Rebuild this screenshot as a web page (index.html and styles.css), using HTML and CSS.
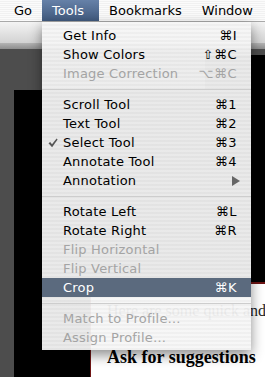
FILE: index.html
```html
<!DOCTYPE html>
<html lang="en">
<head>
    <meta charset="UTF-8">
    <meta name="viewport" content="width=device-width, initial-scale=1.0">
    <title>Tools menu</title>
    <link rel="stylesheet" href="styles.css">
</head>
<body>
    <!-- Строка меню -->
    <div class="menubar">
        <span class="menubar-item">Go</span>
        <span class="menubar-item active">Tools</span>
        <span class="menubar-item">Bookmarks</span>
        <span class="menubar-item">Window</span>
    </div>

    <!-- Окно под меню -->
    <div class="desk">
        <div class="toolbar"></div>
        <div class="toolbar-edge"></div>
        <div class="workspace">
            <div class="canvas">
                <div class="page">
                    <p class="page-text">Here are some quick and</p>
                    <h2 class="page-title">Ask for suggestions</h2>
                </div>
            </div>
        </div>
    </div>

    <!-- Выпадающее меню Tools -->
    <div class="menu">
        <div class="menu-item"><span>Get Info</span><span class="key">⌘I</span></div>
        <div class="menu-item"><span>Show Colors</span><span class="key">⇧⌘C</span></div>
        <div class="menu-item disabled"><span>Image Correction</span><span class="key">⌥⌘C</span></div>
        <div class="menu-sep"></div>
        <div class="menu-item"><span>Scroll Tool</span><span class="key">⌘1</span></div>
        <div class="menu-item"><span>Text Tool</span><span class="key">⌘2</span></div>
        <div class="menu-item checked">
            <svg class="check" width="10" height="10" viewBox="0 0 10 10">
                <path d="M0.5 5.2 L2.2 4 L4 6.3 L8.6 0.6 L9.6 1.5 L4.1 9.2 Z" fill="#555"/>
            </svg>
            <span>Select Tool</span><span class="key">⌘3</span>
        </div>
        <div class="menu-item"><span>Annotate Tool</span><span class="key">⌘4</span></div>
        <div class="menu-item">
            <span>Annotation</span>
            <svg class="arrow" width="8" height="10" viewBox="0 0 8 10">
                <path d="M0 0 L8 5 L0 10 Z" fill="#666"/>
            </svg>
        </div>
        <div class="menu-sep"></div>
        <div class="menu-item"><span>Rotate Left</span><span class="key">⌘L</span></div>
        <div class="menu-item"><span>Rotate Right</span><span class="key">⌘R</span></div>
        <div class="menu-item disabled"><span>Flip Horizontal</span></div>
        <div class="menu-item disabled"><span>Flip Vertical</span></div>
        <div class="menu-item selected"><span>Crop</span><span class="key">⌘K</span></div>
        <div class="menu-sep"></div>
        <div class="menu-item disabled"><span>Match to Profile…</span></div>
        <div class="menu-item disabled"><span>Assign Profile…</span></div>
    </div>
</body>
</html>
```

FILE: styles.css
```css
body {
    font-family: 'DejaVu Sans', sans-serif;
    font-size: 13px;
    margin: 0;
    width: 265px;
    height: 377px;
    overflow: hidden;
    position: relative;
    background-color: #4d4d4d;
}
.menubar {
    display: flex;
    height: 22px;
    padding-left: 4px;
    background: repeating-linear-gradient(#fbfbfb 0, #fbfbfb 1px, #f1f1f1 1px, #f1f1f1 2px);
    border-bottom: 1px solid #a9a9a9;
    box-sizing: border-box;
}
.menubar-item {
    padding: 0 10px;
    line-height: 22px;
    color: #000;
}
.menubar-item.active {
    padding-right: 15px;
    color: #fff;
    background: linear-gradient(#6681a8, #40597d);
}
.desk {
    display: flex;
    flex-direction: column;
    height: 355px;
}
.toolbar {
    height: 21px;
    background: linear-gradient(#f4f4f4, #d2d2d2);
}
.toolbar-edge {
    height: 6px;
    background: linear-gradient(#b4b4b4, #8e8e8e);
}
.workspace {
    flex: 1;
    display: flex;
    padding: 41px 0 0 14px;
    background: linear-gradient(#000, #000) no-repeat right 0 top 6px / 60px 100%, #4d4d4d;
}
.canvas {
    flex: 1;
    display: flex;
    padding: 192px 0 0 76px;
    background-color: #000;
}
.page {
    flex: 1;
    padding: 18px 0 0 16px;
    background-color: #fff;
    border-top: 2px solid #6e1414;
    border-left: 1px solid #6e1414;
    white-space: nowrap;
    overflow: hidden;
    font-family: 'Liberation Serif', serif;
}
.page-text {
    margin: 0;
    font-size: 16px;
    line-height: 18px;
    color: #222;
}
.page-title {
    margin: 27px 0 0;
    font-size: 18px;
    line-height: 20px;
    color: #000;
}

/* выпадающее меню */
.menu {
    position: absolute;
    left: 42px;
    top: 22px;
    width: 209px;
    padding: 4px 0 3px;
    background: repeating-linear-gradient(rgba(246, 246, 246, 0.95) 0, rgba(246, 246, 246, 0.95) 2px, rgba(239, 239, 239, 0.95) 2px, rgba(239, 239, 239, 0.95) 4px);
    box-shadow: 0 5px 12px rgba(0, 0, 0, 0.45);
}
.menu-item {
    position: relative;
    display: flex;
    justify-content: space-between;
    align-items: center;
    height: 19px;
    padding: 0 14px 0 21px;
    color: #000;
    letter-spacing: 0.2px;
}
.menu-item.disabled {
    color: #a4a4a4;
}
.menu-item.selected {
    background-color: #5b6a7e;
    color: #fff;
}
.key {
    letter-spacing: 0.5px;
}
.check {
    position: absolute;
    left: 6px;
    top: 5px;
}
.arrow {
    margin-right: -3px;
}
.menu-sep {
    height: 1px;
    margin: 6px 0 5px;
    background-color: #cdcdcd;
}
```
